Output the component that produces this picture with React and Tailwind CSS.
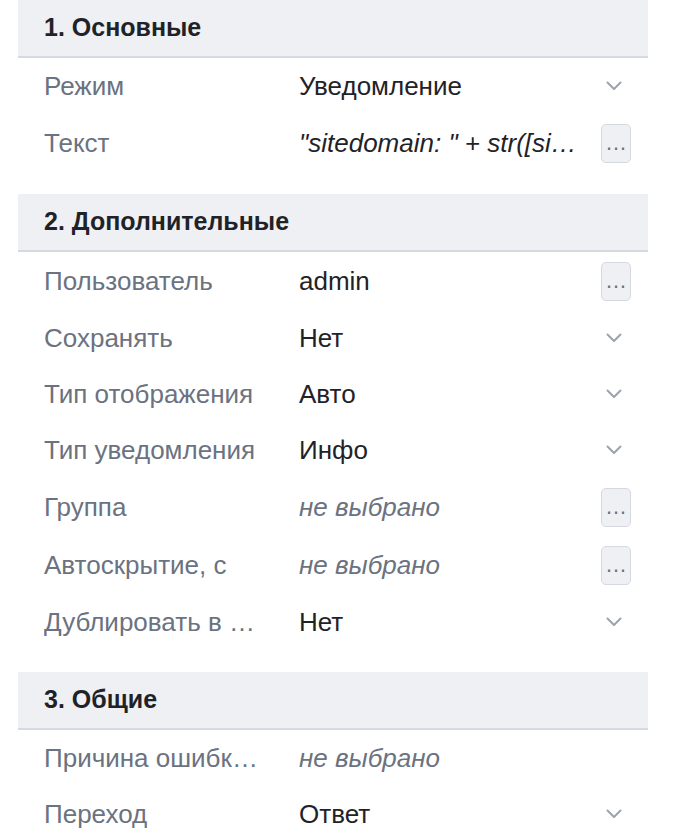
const sections = [
  {
    title: '1. Основные',
    rows: [
      { label: 'Режим', value: 'Уведомление', kind: 'select' },
      { label: 'Текст', value: '"sitedomain: " + str([sitedomain])', kind: 'button', italic: true },
    ],
  },
  {
    title: '2. Дополнительные',
    rows: [
      { label: 'Пользователь', value: 'admin', kind: 'button' },
      { label: 'Сохранять', value: 'Нет', kind: 'select' },
      { label: 'Тип отображения', value: 'Авто', kind: 'select' },
      { label: 'Тип уведомления', value: 'Инфо', kind: 'select' },
      { label: 'Группа', value: 'не выбрано', kind: 'button', empty: true },
      { label: 'Автоскрытие, с', value: 'не выбрано', kind: 'button', empty: true },
      { label: 'Дублировать в журнал', value: 'Нет', kind: 'select' },
    ],
  },
  {
    title: '3. Общие',
    rows: [
      { label: 'Причина ошибки перехода', value: 'не выбрано', kind: 'none', empty: true },
      { label: 'Переход', value: 'Ответ', kind: 'select' },
    ],
  },
];

const Chevron = () => (
  <svg width="16" height="10" viewBox="0 0 16 10" fill="none" className="-ml-[4px]">
    <path d="M1.5 1.5 L8 8 L14.5 1.5" stroke="#9ca3af" strokeWidth="2" strokeLinecap="round" strokeLinejoin="round" />
  </svg>
);

function Row({ row }) {
  const valueClass = row.empty
    ? 'italic text-[#6b7280]'
    : row.italic
      ? 'italic text-[#1f2328]'
      : 'text-[#1f2328]';

  return (
    <div className={`flex items-center pl-[26px] pr-[17px] ${row.kind === 'button' ? 'h-[58px]' : 'h-[56px]'}`}>
      <div className="w-[255px] shrink-0 pr-[39px] truncate text-[#6b7280]">{row.label}</div>
      <div className={`flex-1 min-w-0 truncate pr-[18px] ${valueClass}`}>{row.value}</div>
      <div className="w-[30px] shrink-0 flex justify-center">
        {row.kind === 'select' && <Chevron />}
        {row.kind === 'button' && (
          <button className="w-[30px] h-[39px] rounded-[5px] border-[1.5px] border-[#d5d8df] bg-[#eef0f4] text-[#6b7280] text-[22px] leading-none flex items-end justify-center pb-[8px]">
            …
          </button>
        )}
      </div>
    </div>
  );
}

export default function App() {
  return (
    <div className="bg-white min-h-[840px] px-[18px] pr-[32px] text-[26px] font-['Liberation_Sans',Arial,sans-serif]">
      {sections.map((s, i) => (
        <div key={s.title} className={i > 0 ? 'mt-[22px]' : ''}>
          <div className="h-[58px] bg-[#eef0f4] border-b-2 border-[#d6d9e0] flex items-center pl-[26px] text-[25px] font-bold text-[#1f2328]">
            {s.title}
          </div>
          {s.rows.map((r) => (
            <Row key={r.label} row={r} />
          ))}
        </div>
      ))}
    </div>
  );
}
